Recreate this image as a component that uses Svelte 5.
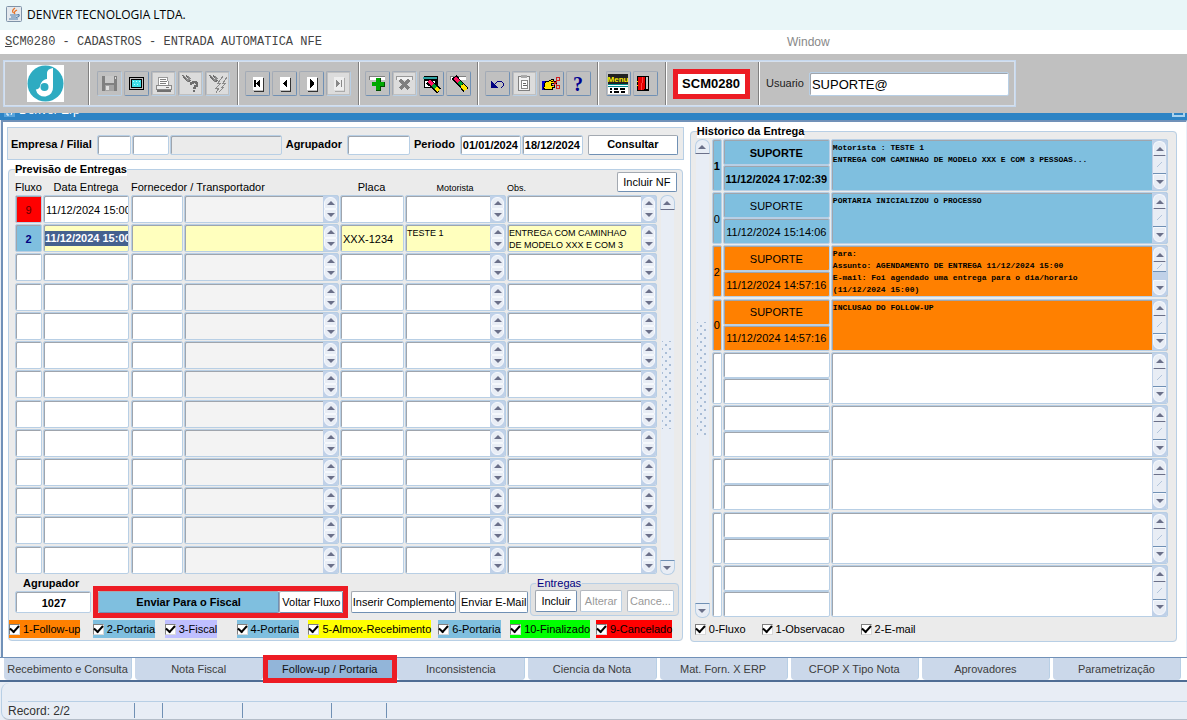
<!--
	App.svelte — SCM0280, entrada automática de NFE.
	Aba Follow-up / Portaria: previsão de entregas à esquerda, histórico à direita.
-->
<script lang="ts">
	interface Delivery {
		flow: string;
		tone?: string;
		date: string;
		plate: string;
		driver: string;
		obs: string;
		current?: boolean;
	}

	interface Entry {
		kind: string;
		tone?: string;
		user: string;
		date: string;
		text: string;
		current?: boolean;
		overflow?: boolean;
	}

	const emptyDelivery: Delivery = { flow: '', date: '', plate: '', driver: '', obs: '' };
	const emptyEntry: Entry = { kind: '', user: '', date: '', text: '' };

	const deliveries: Delivery[] = [
		{ ...emptyDelivery, flow: '9', tone: 'red', date: '11/12/2024 15:00' },
		{
			flow: '2',
			tone: 'blue',
			date: '11/12/2024 15:00',
			plate: 'XXX-1234',
			driver: 'TESTE 1',
			obs: 'ENTREGA COM CAMINHAO DE MODELO XXX E COM 3',
			current: true
		},
		...Array.from({ length: 11 }, () => ({ ...emptyDelivery }))
	];

	const history: Entry[] = [
		{
			kind: '1',
			tone: 'blue',
			user: 'SUPORTE',
			date: '11/12/2024 17:02:39',
			text: 'Motorista : TESTE 1\nENTREGA COM CAMINHAO DE MODELO XXX E COM 3 PESSOAS...',
			current: true
		},
		{ kind: '0', tone: 'blue', user: 'SUPORTE', date: '11/12/2024 15:14:06', text: 'PORTARIA INICIALIZOU O PROCESSO' },
		{
			kind: '2',
			tone: 'orange',
			user: 'SUPORTE',
			date: '11/12/2024 14:57:16',
			text: 'Para:\nAssunto: AGENDAMENTO DE ENTREGA 11/12/2024 15:00\nE-mail: Foi agendado uma entrega para o dia/horario\n(11/12/2024 15:00)',
			overflow: true
		},
		{ kind: '0', tone: 'orange', user: 'SUPORTE', date: '11/12/2024 14:57:16', text: 'INCLUSAO DO FOLLOW-UP' },
		...Array.from({ length: 5 }, () => ({ ...emptyEntry }))
	];

	const flows = [
		{ label: '1-Follow-up', tone: 'orange' },
		{ label: '2-Portaria', tone: 'blue' },
		{ label: '3-Fiscal', tone: 'lilac' },
		{ label: '4-Portaria', tone: 'blue' },
		{ label: '5-Almox-Recebimento', tone: 'yellow' },
		{ label: '6-Portaria', tone: 'blue' },
		{ label: '10-Finalizado', tone: 'green' },
		{ label: '9-Cancelado', tone: 'red' }
	];

	const kinds = ['0-Fluxo', '1-Observacao', '2-E-mail'];

	const tabs = [
		'Recebimento e Consulta',
		'Nota Fiscal',
		'Follow-up / Portaria',
		'Inconsistencia',
		'Ciencia da Nota',
		'Mat. Forn. X ERP',
		'CFOP X Tipo Nota',
		'Aprovadores',
		'Parametrização'
	];
	let active = $state('Follow-up / Portaria');

	const tools = [
		[
			{ id: 'save', label: 'Salvar', off: true },
			{ id: 'screen', label: 'Tela' },
			{ id: 'print', label: 'Imprimir', off: true },
			{ id: 'query', label: 'Entrar consulta', off: true },
			{ id: 'run', label: 'Executar consulta', off: true }
		],
		[
			{ id: 'first', label: 'Primeiro' },
			{ id: 'prev', label: 'Anterior' },
			{ id: 'next', label: 'Próximo' },
			{ id: 'last', label: 'Último', off: true }
		],
		[
			{ id: 'add', label: 'Inserir registro' },
			{ id: 'remove', label: 'Remover registro', off: true },
			{ id: 'clearBlock', label: 'Limpar bloco' },
			{ id: 'clear', label: 'Limpar registro' }
		],
		[
			{ id: 'undo', label: 'Desfazer' },
			{ id: 'paste', label: 'Colar', off: true },
			{ id: 'cut', label: 'Cortar' },
			{ id: 'help', label: 'Ajuda' }
		],
		[
			{ id: 'menu', label: 'Menu' },
			{ id: 'exit', label: 'Sair' }
		]
	];
	const groupWidths = [149, 121, 119, 120, 68];
</script>

{#snippet icon(id: string)}
	<svg viewBox="0 0 23 23" width="23" height="23" shape-rendering="crispEdges" aria-hidden="true">
		{#if id === 'save'}
			<path d="M4 4h15v15H4z" fill="#808080" />
			<path d="M7 4h9v7H7z" fill="#c8c8c8" />
			<path d="M7 13h9v6H7z" fill="#a5a5a5" />
			<path d="M8 14h3v4H8z" fill="#e0e0e0" />
			<path d="M17 5h1v2h-1z" fill="#ddd" />
		{:else if id === 'screen'}
			<rect x="4.5" y="5.5" width="14" height="12" rx="1" fill="#c0c0c0" stroke="#000" />
			<path d="M6 7h11v9H6z" fill="#000" />
			<path d="M7 8h9v7H7z" fill="#3fdfe8" />
			<path d="M8 9h1v1H8zM11 9h1v1h-1zM14 9h1v1h-1zM9 12h1v1H9zM12 12h1v1h-1z" fill="#b8ffff" />
		{:else if id === 'print'}
			<path d="M1 1h21v21H1z" fill="#dcdcdc" />
			<path d="M6 5h9l2 8H6z" fill="#fff" stroke="#9a9a9a" />
			<path d="M8 7h6M8 9h7M8 11h6" stroke="#808080" />
			<path d="M4 13h15v4H4z" fill="#eee" stroke="#8a8a8a" />
			<path d="M5 19h14" stroke="#707070" stroke-width="2" />
			<path d="M14 15h3" stroke="#777" />
		{:else if id === 'query'}
			<path d="M1 1h21v21H1z" fill="#dcdcdc" />
			<path d="M4 3v3l4 4 4-3-3-3v3z" fill="#8a8a8a" />
			<path d="M3 3l5 6M7 3l2 3M9 10l3-2" fill="none" stroke="#6e6e6e" />
			<path d="M12 13v-2h2v-1h3v1h1v3h-2v2h-2" fill="none" stroke="#6e6e6e" stroke-width="2" />
			<path d="M14 18h2v2h-2z" fill="#6e6e6e" />
		{:else if id === 'run'}
			<path d="M1 1h21v21H1z" fill="#dcdcdc" />
			<path d="M4 3v3l4 4 4-3-3-3v3z" fill="#8a8a8a" />
			<path d="M3 3l5 6M7 3l2 3M9 10l3-2" fill="none" stroke="#6e6e6e" />
			<path d="M17 4l-5 7h3l-5 5h3l-3 5M21 5l-4 6h3l-4 4h2l-5 5" fill="none" stroke="#8a8a8a" />
		{:else if id === 'first' || id === 'prev' || id === 'next'}
			<path d="M7 5h10v13H7z" fill="#fff" />
			<path d="M17 6v13H8" fill="none" stroke="#333" />
			{#if id === 'first'}
				<path d="M8 8h2v7H8zM14 7v9l-4-4v-1z" fill="#000" />
			{:else if id === 'prev'}
				<path d="M14 7v9l-4-4v-1z" fill="#000" />
			{:else}
				<path d="M10 7v9l4-4v-1z" fill="#000" />
			{/if}
		{:else if id === 'last'}
			<path d="M1 1h21v21H1z" fill="#dcdcdc" />
			<path d="M7 5h10v13H7z" fill="#eee" />
			<path d="M17 6v13H8" fill="none" stroke="#aaa" />
			<path d="M9 8v7l4-3v-1zM14 8h1v7h-1z" fill="#888" />
		{:else if id === 'add'}
			<path d="M3 4h16v4H3z" fill="#fff" />
			<path d="M3 8V4h16" fill="none" stroke="#808080" />
			<path d="M10 6h4v4h4v4h-4v4h-4v-4H6v-4h4z" fill="#00a800" />
			<path d="M14 6v4M18 10v4h-4v4h-4" fill="none" stroke="#004c00" />
		{:else if id === 'remove'}
			<path d="M1 1h21v21H1z" fill="#dcdcdc" />
			<path d="M3 8V4h16v4" fill="#f2f2f2" stroke="#999" />
			<path d="M7 8l9 9M16 8l-9 9" stroke="#808080" stroke-width="3" />
		{:else if id === 'clearBlock'}
			<path d="M4 4h14v12H4z" fill="#000" />
			<path d="M3 5h14v2H3z" fill="#2fa3a3" />
			<path d="M5 9h10v6H5z" fill="#fff" />
			<path d="M8 9l11 10" stroke="#000" stroke-width="6" />
			<path d="M9 9l4 4" stroke="#ff1060" stroke-width="4" />
			<path d="M13 13l3 3" stroke="#00a030" stroke-width="4" />
			<path d="M16 16l3 3" stroke="#ffe600" stroke-width="4" />
		{:else if id === 'clear'}
			<path d="M3 4h16v4H3z" fill="#fff" />
			<path d="M3 8V4h16" fill="none" stroke="#808080" />
			<path d="M7 5l12 13" stroke="#000" stroke-width="6" />
			<path d="M8 6l4 4" stroke="#ff1060" stroke-width="4" />
			<path d="M12 10l3 3" stroke="#00a030" stroke-width="4" />
			<path d="M15 13l4 5" stroke="#ffe600" stroke-width="4" />
		{:else if id === 'undo'}
			<path d="M5 9v7h7z" fill="#000080" />
			<path d="M8 13l4-4h3l2 2v3l-2 2" fill="none" stroke="#000080" />
		{:else if id === 'paste'}
			<path d="M1 1h21v21H1z" fill="#dcdcdc" />
			<rect x="5.5" y="4.5" width="11" height="14" rx="1" fill="#f4f4f4" stroke="#808080" />
			<path d="M8 3h6v3H8z" fill="#aaa" />
			<path d="M8.5 8.5h6v8h-6z" fill="#fff" stroke="#888" />
			<path d="M10 11h3M10 13h4" stroke="#666" />
		{:else if id === 'cut'}
			<path d="M2 9h3v9H2z" fill="#0000d0" />
			<path d="M5.5 9.5h3l3-2h2v2h-3 6v2h-5v2h3v2h-2v2h-7l-2-1z" fill="#ffe600" stroke="#000" />
			<path d="M13 9l5 5M13 14l5-6" stroke="#d02020" />
			<path d="M16.5 5.500h3v3h-3zM16.5 13.5h3v3h-3z" fill="none" stroke="#d02020" />
		{:else if id === 'help'}
			<text x="11" y="19" class="glyph-help">?</text>
		{:else if id === 'menu'}
			<path d="M1 12h20v10H1z" fill="#fff" />
			<path d="M1 2h20v10H1z" fill="#222" />
			<path d="M1 12h20M1 14h20" stroke="#008c8c" />
			<path d="M3 17h2M7 17h4M13 17h5M3 20h2M7 20h5M14 20h4" stroke="#000" stroke-width="2" />
			<text x="11" y="10" class="glyph-menu">Menu</text>
		{:else if id === 'exit'}
			<path d="M3 4h12v15H3z" fill="#000" />
			<path d="M12 5h2v12h-2z" fill="#c8c8c8" />
			<path d="M4 5h7v11l-2 2H4z" fill="#e80000" />
			<path d="M9 5l-2 13" stroke="#ff4040" />
			<path d="M3 9h1v1H3zM3 13h1v1H3z" fill="#ffe600" />
		{/if}
	</svg>
{/snippet}

{#snippet arrows(name: string)}
	<span class="spin">
		<button type="button" tabindex="-1" aria-label="{name}: subir"><i class="tri up"></i></button>
		<button type="button" tabindex="-1" aria-label="{name}: descer"><i class="tri down"></i></button>
	</span>
{/snippet}

{#snippet scroller(name: string)}
	<div class="scroller">
		<button type="button" tabindex="-1" aria-label="{name}: subir"><i class="tri up"></i></button>
		<span class="thumb"><span class="grip"></span></span>
		<button type="button" tabindex="-1" aria-label="{name}: descer"><i class="tri down"></i></button>
	</div>
{/snippet}

<div class="window">
	<header class="titlebar">
		<svg viewBox="0 0 16 16" width="16" height="16" aria-hidden="true">
			<rect x="0.5" y="0.5" width="15" height="15" rx="1" fill="#e4e9ee" stroke="#7f93a8" />
			<path d="M9 2q-4 3-1.500 5M11 4q-4 2-2 4" fill="none" stroke="#e8762b" stroke-width="1.300" />
			<path d="M4 9h7M5 11h5M3 13h9M11 9q3-1 2 1-.5 1-3 1.500" fill="none" stroke="#4f7ca8" stroke-width="1.200" />
		</svg>
		<span>DENVER TECNOLOGIA LTDA.</span>
	</header>

	<nav class="menubar">
		<a href="#scm"><u>S</u>CM0280 - CADASTROS - ENTRADA AUTOMATICA NFE</a>
		<a href="#window" class="menu-window">Window</a>
	</nav>

	<div class="toolbar">
		<div class="toolbar-frame">
			<div class="tool-group logo">
				<svg viewBox="0 0 37 37" width="37" height="37" role="img" aria-label="Denver">
					<path d="M0 0h37v37H0z" fill="#fff" />
					<circle cx="18.5" cy="18.5" r="18" fill="#2eabc1" />
					<path
						d="M26 3v19a8.700 8.700 0 0 1-17.200 2.500c2-.2 3.200-1 4-2.500.8-5 3.500-7.500 7.200-8V8q0-4 6-5z"
						fill="#fff"
					/>
					<circle cx="17.5" cy="22" r="4" fill="#2eabc1" />
				</svg>
			</div>
			{#each tools as group, i}
				<div class="tool-group" style="width: {groupWidths[i]}px">
					{#each group as tool (tool.id)}
						<button type="button" class="tool" class:off={tool.off} disabled={tool.off} aria-label={tool.label}>
							{@render icon(tool.id)}
						</button>
					{/each}
				</div>
			{/each}
			<div class="tool-group code"><output class="marked">SCM0280</output></div>
			<div class="tool-group user">
				<label for="user">Usuario</label>
				<input id="user" value="SUPORTE@" />
			</div>
		</div>
	</div>

	<div class="inner-title">
		<svg viewBox="0 0 11 11" width="11" height="11" aria-hidden="true">
			<path d="M0 0h11v11H0z" fill="#5aa5dc" />
			<path d="M3 4v5h2M9 4L7 9" stroke="#fff" fill="none" />
		</svg>
		<span>Denver Erp</span>
		<i class="restore"></i>
	</div>

	<main>
		<div class="left">
			<form class="filter" onsubmit={(e) => e.preventDefault()}>
				<label for="company">Empresa / Filial</label>
				<input id="company" class="w-company" />
				<input class="w-branch" aria-label="Filial" />
				<input class="w-name" aria-label="Nome da filial" disabled />
				<label for="group-filter">Agrupador</label>
				<input id="group-filter" class="w-group" />
				<label for="from">Periodo</label>
				<input id="from" class="w-date" value="01/01/2024" />
				<input class="w-date" aria-label="Periodo final" value="18/12/2024" />
				<button class="btn consult">Consultar</button>
			</form>

			<fieldset class="panel deliveries">
				<legend>Previsão de Entregas</legend>
				<div class="delivery-grid">
					<table>
						<colgroup>
							<col class="c-flow" /><col class="c-date" /><col class="c-code" /><col class="c-supplier" />
							<col class="c-plate" /><col class="c-driver" /><col class="c-obs" />
						</colgroup>
						<thead>
							<tr>
								<th>Fluxo</th>
								<th>Data Entrega</th>
								<th colspan="2" class="start">Fornecedor / Transportador</th>
								<th>Placa</th>
								<th class="small">Motorista</th>
								<th class="small start">Obs.</th>
							</tr>
						</thead>
						<tbody>
							{#each deliveries as d}
								<tr class:current={d.current}>
									<td><input class="cell center {d.tone ?? ''}" value={d.flow} aria-label="Fluxo" /></td>
									<td class="date">
										{#if d.current}
											<div class="cell picked"><mark>{d.date}</mark></div>
										{:else}
											<input class="cell" value={d.date} aria-label="Data Entrega" />
										{/if}
									</td>
									<td><input class="cell" aria-label="Fornecedor" /></td>
									<td>
										<div class="cell multi muted">
											<textarea aria-label="Transportador"></textarea>
											{@render arrows('Transportador')}
										</div>
									</td>
									<td><input class="cell" value={d.plate} aria-label="Placa" /></td>
									<td>
										<div class="cell multi">
											<textarea aria-label="Motorista" value={d.driver}></textarea>
											{@render arrows('Motorista')}
										</div>
									</td>
									<td>
										<div class="cell multi">
											<textarea aria-label="Obs." value={d.obs}></textarea>
											{@render arrows('Obs.')}
										</div>
									</td>
								</tr>
							{/each}
						</tbody>
					</table>
					<button type="button" class="btn include-nf">Incluir NF</button>
					{@render scroller('Entregas')}
				</div>

				<div class="actions">
					<div class="grouper">
						<label for="grouper">Agrupador</label>
						<input id="grouper" class="center" value="1027" />
					</div>
					<div class="marked send">
						<button type="button" class="btn blue strong">Enviar Para o Fiscal</button>
						<button type="button" class="btn">Voltar Fluxo</button>
					</div>
					<button type="button" class="btn complement">Inserir Complemento</button>
					<button type="button" class="btn mail">Enviar E-Mail</button>
					<fieldset class="entries">
						<legend>Entregas</legend>
						<button type="button" class="btn">Incluir</button>
						<button type="button" class="btn" disabled>Alterar</button>
						<button type="button" class="btn last" disabled>Cance...</button>
					</fieldset>
				</div>

				<div class="flows">
					{#each flows as f}
						<div><label class="check {f.tone}"><input type="checkbox" checked />{f.label}</label></div>
					{/each}
				</div>
			</fieldset>
		</div>

		<fieldset class="panel history">
			<legend>Historico da Entrega</legend>
			<div class="history-grid">
				{@render scroller('Historico')}
				<table>
					<colgroup><col class="c-kind" /><col class="c-user" /><col /></colgroup>
					<tbody>
						{#each history as h}
							<tr class={h.tone ?? ''} class:strong={h.current}>
								<td><input class="cell center kind" value={h.kind} aria-label="Tipo" /></td>
								<td>
									<input class="cell center" value={h.user} aria-label="Usuario" />
									<input class="cell center" value={h.date} aria-label="Data" />
								</td>
								<td>
									<div class="cell multi message">
										<textarea aria-label="Mensagem" value={h.text}></textarea>
										<span class="bar">
											<button type="button" tabindex="-1" aria-label="Subir"><i class="tri up"></i></button>
											<span class="bar-thumb" class:short={h.overflow}></span>
											<button type="button" tabindex="-1" aria-label="Descer"><i class="tri down"></i></button>
										</span>
									</div>
								</td>
							</tr>
						{/each}
					</tbody>
				</table>
			</div>
			<div class="kinds">
				{#each kinds as k}
					<label class="check"><input type="checkbox" checked />{k}</label>
				{/each}
			</div>
		</fieldset>
	</main>

	<div class="tabs" role="tablist">
		{#each tabs as t (t)}
			<button type="button" role="tab" aria-selected={active === t} class:active={active === t} onclick={() => (active = t)}>
				{t}
			</button>
		{/each}
	</div>

	<footer>
		<div class="message-line"></div>
		<div class="status">
			<span class="record">Record: 2/2</span>
			<span class="s1"></span>
			<span class="s2"></span>
			<span class="s3"></span>
			<span class="s4"></span>
		</div>
	</footer>
</div>

<style>
	:global(body) {
		background: #e8edf5;
	}
	.window {
		--edge: #b8cfe5;
		--shade: #9fa5ad;
		--panel: #ebebeb;
		min-height: 100vh;
		display: flex;
		flex-direction: column;
		font-family: 'Liberation Sans', Arial, sans-serif;
		font-size: 11px;
		line-height: 13px;
		color: #000;
	}
	.window,
	.window * {
		box-sizing: border-box;
	}
	button,
	input,
	textarea {
		font: inherit;
		color: inherit;
		margin: 0;
		padding: 0;
		min-width: 0;
		border-radius: 0;
	}
	fieldset {
		margin: 0;
		padding: 0;
		min-width: 0;
	}
	.center {
		text-align: center;
	}
	.strong {
		font-weight: bold;
	}

	/* topo da janela */
	.titlebar {
		height: 30px;
		display: flex;
		align-items: center;
		gap: 5px;
		padding: 0 0 2px 6px;
		background: #e9f6f8;
		font-family: 'Open Sans', 'Segoe UI', sans-serif;
		font-size: 12px;
	}
	.menubar {
		height: 24px;
		display: flex;
		align-items: center;
		padding-left: 5px;
		background: #fff;
		font-family: 'Liberation Mono', 'Courier New', monospace;
		font-size: 12px;
	}
	.menubar a {
		color: #444;
		text-decoration: none;
		flex: 0 1 782px;
	}
	.menubar .menu-window {
		flex: none;
		color: #888;
		font-family: 'Liberation Sans', Arial, sans-serif;
	}

	/* barra de ferramentas */
	.toolbar {
		background: #c0c0c0;
		padding: 6px 3px;
	}
	.toolbar-frame {
		display: flex;
		width: fit-content;
		height: 47px;
		border: 1px solid #c6d8ee;
		outline: 1px solid #d5e0ee;
		outline-offset: -2px;
	}
	.tool-group {
		display: flex;
		align-items: center;
		justify-content: center;
		gap: 2px;
		padding-right: 2px;
		border-right: 1px solid #fff;
		box-shadow: inset -1px 0 0 #808080;
	}
	.logo {
		width: 86px;
		padding-right: 3px;
	}
	.tool {
		width: 25px;
		height: 25px;
		display: grid;
		place-items: center;
		background: #c0c0c0;
		border: 1px solid #a3abb6;
		border-right-color: #7090b4;
		border-bottom-color: #7090b4;
		border-radius: 2px;
	}
	.tool.off {
		border-right-color: var(--edge);
		border-bottom-color: var(--edge);
	}
	.glyph-help {
		font: bold 20px 'Liberation Serif', serif;
		text-anchor: middle;
		fill: #000090;
	}
	.glyph-menu {
		font: bold 8px 'Liberation Sans', sans-serif;
		text-anchor: middle;
		fill: #ffee00;
	}
	.marked {
		border: 5px solid #ed1c24;
	}
	.code {
		width: 93px;
		padding-right: 4px;
	}
	.code .marked {
		width: 77px;
		height: 30px;
		background: #fff;
		font-size: 13px;
		line-height: 19px;
		font-weight: bold;
		text-align: center;
	}
	.user {
		padding: 0 6px;
		gap: 5px;
		border: none;
		box-shadow: none;
		color: #222;
	}
	.user input {
		width: 200px;
		height: 24px;
		font-size: 13px;
		color: #000;
	}

	.inner-title {
		height: 7px;
		overflow: hidden;
		display: flex;
		align-items: flex-end;
		gap: 4px;
		padding: 0 2px 3px 4px;
		background: #2d84c5;
		color: #fff;
		font-size: 12px;
		line-height: 14px;
	}
	.restore {
		width: 13px;
		height: 10px;
		margin-left: auto;
		border: 2px solid #a9d2ee;
	}

	/* conteúdo */
	main {
		display: flex;
		align-items: flex-start;
		gap: 6px;
		padding: 5px 9px 15px 4px;
		background: #fff;
		border: 1px solid #e9eff8;
		border-top: 2px solid #7191b8;
		border-left: 2px solid #7191b8;
		border-bottom: none;
		margin-left: 1px;
	}
	.left {
		flex: 678 1 0;
		min-width: 0;
	}
	.history {
		flex: 486 1 0;
	}
	input,
	.cell {
		border: 1px solid var(--edge);
		border-radius: 2px;
		box-shadow: inset 1px 1px 0 var(--shade);
		background: #fff;
		outline: none;
	}
	input {
		padding: 1px 0 0 2px;
	}
	.btn {
		height: 22px;
		background: #fff;
		border: 1px solid #a3a9b1;
		border-right-color: #7090b4;
		border-bottom-color: #7090b4;
		border-radius: 2px;
		white-space: nowrap;
	}
	.btn:disabled {
		color: #999;
		border-color: #b4b9c0 var(--edge) var(--edge) #b4b9c0;
	}

	.filter {
		display: flex;
		align-items: center;
		height: 33px;
		padding: 2px 5px 0 3px;
		background: var(--panel);
		border: 1px solid var(--edge);
		font-weight: bold;
	}
	.filter label {
		flex: none;
	}
	.filter input {
		height: 20px;
		margin-right: 1px;
	}
	.filter input:disabled {
		background: var(--panel);
	}
	.filter label + input {
		margin-left: 5px;
	}
	.filter input + label {
		margin-left: 3px;
	}
	.w-company {
		width: 34px;
	}
	.w-branch {
		width: 37px;
	}
	.w-name {
		flex: 0 1 112px;
	}
	.w-group {
		width: 63px;
	}
	.filter .w-date {
		width: 61px;
		padding: 1px 0 0;
		text-align: center;
	}
	.consult {
		width: 90px;
		height: 20px;
		margin-left: auto;
		font-weight: bold;
	}

	.panel {
		background: var(--panel);
		border: 1px solid var(--edge);
		border-radius: 4px;
	}
	.panel > legend {
		margin-left: 6px;
		padding: 0;
		background: #fff;
		font-weight: bold;
	}
	.deliveries {
		margin: 3px 1px 0;
	}
	.delivery-grid {
		display: grid;
		grid-template-columns: minmax(0, 643fr) 15px;
		grid-template-rows: 19px auto;
		column-gap: 3px;
		padding: 0 7px 0 6px;
	}
	table {
		width: 100%;
		table-layout: fixed;
		border-collapse: collapse;
	}
	.delivery-grid table {
		grid-area: 1 / 1 / 3 / 2;
		height: 399px;
	}
	.include-nf {
		grid-area: 1 / 1 / 2 / 3;
		justify-self: end;
		width: 60px;
		height: 20px;
		margin: -4px -2px 0 0;
		z-index: 1;
	}
	.delivery-grid .scroller {
		grid-area: 2 / 2;
	}
	.c-flow {
		width: 28px;
	}
	.c-date {
		width: 88px;
	}
	.c-code {
		width: 53px;
	}
	.c-supplier {
		width: 156px;
	}
	.c-plate {
		width: 65px;
	}
	.c-driver {
		width: 102px;
	}
	.c-obs {
		width: 151px;
	}
	th {
		height: 19px;
		padding: 4px 2px 0 0;
		font-weight: normal;
		text-align: center;
		white-space: nowrap;
	}
	th.start {
		text-align: left;
	}
	th.small {
		font-size: 9px;
		padding-top: 6px;
	}
	td {
		padding: 0 1px 0 0;
		vertical-align: top;
	}
	td.date {
		padding-right: 2px;
	}
	.cell {
		display: flex;
		width: 100%;
		height: 28px;
		overflow: hidden;
	}
	td input.center {
		padding: 1px 0 0;
	}
	textarea {
		flex: 1;
		padding: 2px 0 0 1px;
		border: none;
		outline: none;
		background: none;
		resize: none;
		overflow: hidden;
		font-size: 9px;
		line-height: 12px;
		white-space: pre-wrap;
	}
	.current .cell {
		background-color: #ffffbe;
	}
	.muted {
		background: #f3f3f3;
	}
	.picked {
		align-items: center;
		padding-left: 1px;
	}
	mark {
		background: #45618f;
		color: #fff;
		font-weight: bold;
		line-height: 15px;
		white-space: nowrap;
	}
	.blue,
	.blue .cell,
	.current .cell.blue {
		background-color: #7fbfdf;
	}
	.current .cell.blue {
		color: #000080;
		font-weight: bold;
	}
	.orange,
	.orange .cell {
		background-color: #ff8000;
	}
	tr.blue,
	tr.orange {
		background: none;
	}
	.red {
		background-color: #f00;
	}
	.lilac {
		background-color: #bfbfff;
	}
	.yellow {
		background-color: #ff0;
	}
	.green {
		background-color: #0f0;
	}
	input.red {
		color: #600000;
	}

	/* barras de rolagem e setas */
	.tri {
		display: block;
		width: 0;
		height: 0;
		margin: auto;
		border: 4px solid transparent;
	}
	.tri.up {
		border-top: none;
		border-bottom-color: #6b7089;
	}
	.tri.down {
		border-bottom: none;
		border-top-color: #6b7089;
	}
	.spin {
		flex: none;
		width: 15px;
		padding: 1px 1px 1px 1px;
		display: flex;
		flex-direction: column;
		background: #c0d1e8;
	}
	.spin button {
		flex: 1;
		border: 1px solid #f6f9fd;
		background: #e8edf5;
	}
	.spin button:first-child {
		border-radius: 6px 6px 0 0;
	}
	.spin button:last-child {
		border-radius: 0 0 6px 6px;
	}
	.scroller {
		width: 15px;
		display: flex;
		flex-direction: column;
	}
	.scroller button {
		height: 15px;
		border: 1px solid var(--edge);
		background: #e8edf5;
	}
	.scroller button:first-child {
		border-radius: 7px 7px 0 0;
		border-bottom-color: #6b7089;
	}
	.scroller button:last-child {
		border-radius: 0 0 7px 7px;
		border-top-color: #7090b4;
	}
	.thumb {
		flex: 1;
		display: flex;
		align-items: center;
		margin: 0 1px;
		background: #e8edf5;
	}
	.grip {
		width: 10px;
		height: 25%;
		margin: 0 auto;
		background-image: radial-gradient(circle, #a9bdd6 1px, transparent 1px), radial-gradient(circle, #a9bdd6 1px, transparent 1px);
		background-size: 8px 8px;
		background-position:
			0 0,
			4px 4px;
	}

	/* linha de ações */
	.actions {
		display: flex;
		align-items: flex-end;
		height: 43px;
		padding: 0 3px 0 6px;
	}
	.grouper {
		width: 76px;
		margin: 0 2px 5px 0;
		font-weight: bold;
	}
	.grouper label {
		display: block;
		margin: 0 0 1px 8px;
	}
	.grouper input {
		width: 100%;
		height: 22px;
	}
	.send {
		flex: 0 1 256px;
		display: flex;
		margin-right: 3px;
	}
	.send .btn {
		width: 64px;
		height: 22px;
	}
	.send .blue {
		flex: 1;
	}
	.complement {
		width: 105px;
		margin: 0 3px 5px 0;
	}
	.mail {
		width: 69px;
		margin: 0 2px 5px 0;
	}
	.entries {
		flex: 1 1 149px;
		display: flex;
		gap: 3px;
		padding: 0 4px 3px;
		margin-bottom: 2px;
		border: 1px solid var(--edge);
		border-radius: 4px;
		background: #e2e2e2;
	}
	.entries legend {
		padding: 0 1px;
		margin-left: 1px;
		color: #000080;
	}
	.entries .btn {
		flex: 42 1 0;
	}
	.entries .last {
		flex-grow: 47;
		margin-left: 2px;
	}
	.flows {
		display: grid;
		grid-template-columns: 84fr 72fr 72fr 72fr 130fr 72fr 86fr 86fr;
		padding: 2px 0;
	}
	.check {
		display: inline-flex;
		align-items: center;
		gap: 3px;
		height: 18px;
		white-space: nowrap;
	}
	.check input {
		appearance: none;
		width: 11px;
		height: 11px;
		padding: 0;
		border: 1px solid #808080;
		border-right-color: #d8d8d8;
		border-bottom-color: #d8d8d8;
		border-radius: 0;
		box-shadow: none;
		background: #fff;
		display: grid;
		place-items: center;
	}
	.check input:checked::before {
		content: '';
		width: 7px;
		height: 4px;
		border: solid #000;
		border-width: 0 0 2px 2px;
		transform: rotate(-48deg);
		margin-bottom: 2px;
	}

	/* histórico */
	.history {
		margin-top: -2px;
	}
	.history-grid {
		display: flex;
		gap: 2px;
		padding: 1px 7px 0 4px;
	}
	.history-grid .scroller {
		flex: none;
	}
	.history-grid table {
		height: 479px;
	}
	.c-kind {
		width: 11px;
	}
	.c-user {
		width: 108px;
	}
	.history td .cell {
		height: 26px;
	}
	.history td .kind,
	.history td .message {
		height: 52px;
	}
	.message textarea {
		font-family: 'Liberation Mono', 'Courier New', monospace;
		font-size: 8px;
		font-weight: bold;
	}
	.bar {
		flex: none;
		width: 15px;
		display: flex;
		flex-direction: column;
		padding: 1px;
		background: #c0d1e8;
	}
	.bar button {
		height: 15px;
		border: 1px solid #f6f9fd;
		background: #e8edf5;
	}
	.bar button:first-child {
		border-radius: 6px 6px 0 0;
		border-bottom-color: #6b7089;
	}
	.bar button:last-child {
		border-radius: 0 0 6px 6px;
		margin-top: auto;
	}
	.bar-thumb {
		flex: 1;
		background: linear-gradient(135deg, transparent 45%, #b3c5db 45% 55%, transparent 55%) center / 5px 5px no-repeat #e8edf5;
		border-bottom: 1px solid #7090b4;
	}
	.bar-thumb.short {
		flex: 0 0 10px;
	}
	.kinds {
		display: flex;
		gap: 16px;
		padding: 2px 4px 3px;
	}

	/* abas e rodapé */
	.tabs {
		display: flex;
		gap: 3px;
		padding: 0 6px 0 4px;
		background: #fff;
		border-top: 1px solid #7191b8;
		border-bottom: 2px solid #4f6d94;
	}
	.tabs button {
		flex: 1 1 0;
		height: 22px;
		border: none;
		border-right: 1px solid var(--edge);
		border-radius: 0 0 4px 4px;
		background: #cbd8ea;
		color: #3c3c3c;
		white-space: nowrap;
	}
	.tabs .active {
		outline: 5px solid #ed1c24;
		outline-offset: -2px;
		border-radius: 0;
		background: #92b5d9;
		color: #111;
		z-index: 1;
	}
	footer {
		flex: 1;
		display: flex;
		flex-direction: column;
		margin: 1px 0 0 1px;
		background: #e8edf5;
		border-left: 1px solid var(--edge);
		border-bottom: 1px solid #b4bdc8;
		border-radius: 8px 0 0 8px;
	}
	.message-line {
		height: 19px;
		margin-left: 6px;
		border-bottom: 1px solid var(--edge);
	}
	.status {
		display: flex;
		padding: 1px 0 0 6px;
		font-size: 12px;
		line-height: 17px;
		color: #333;
	}
	.status span {
		height: 15px;
		border-right: 1px solid #7090b4;
	}
	.record {
		width: 127px;
	}
	.s1 {
		width: 28px;
	}
	.s2 {
		width: 80px;
	}
	.s3 {
		width: 89px;
	}
	.s4 {
		width: 55px;
	}
</style>
